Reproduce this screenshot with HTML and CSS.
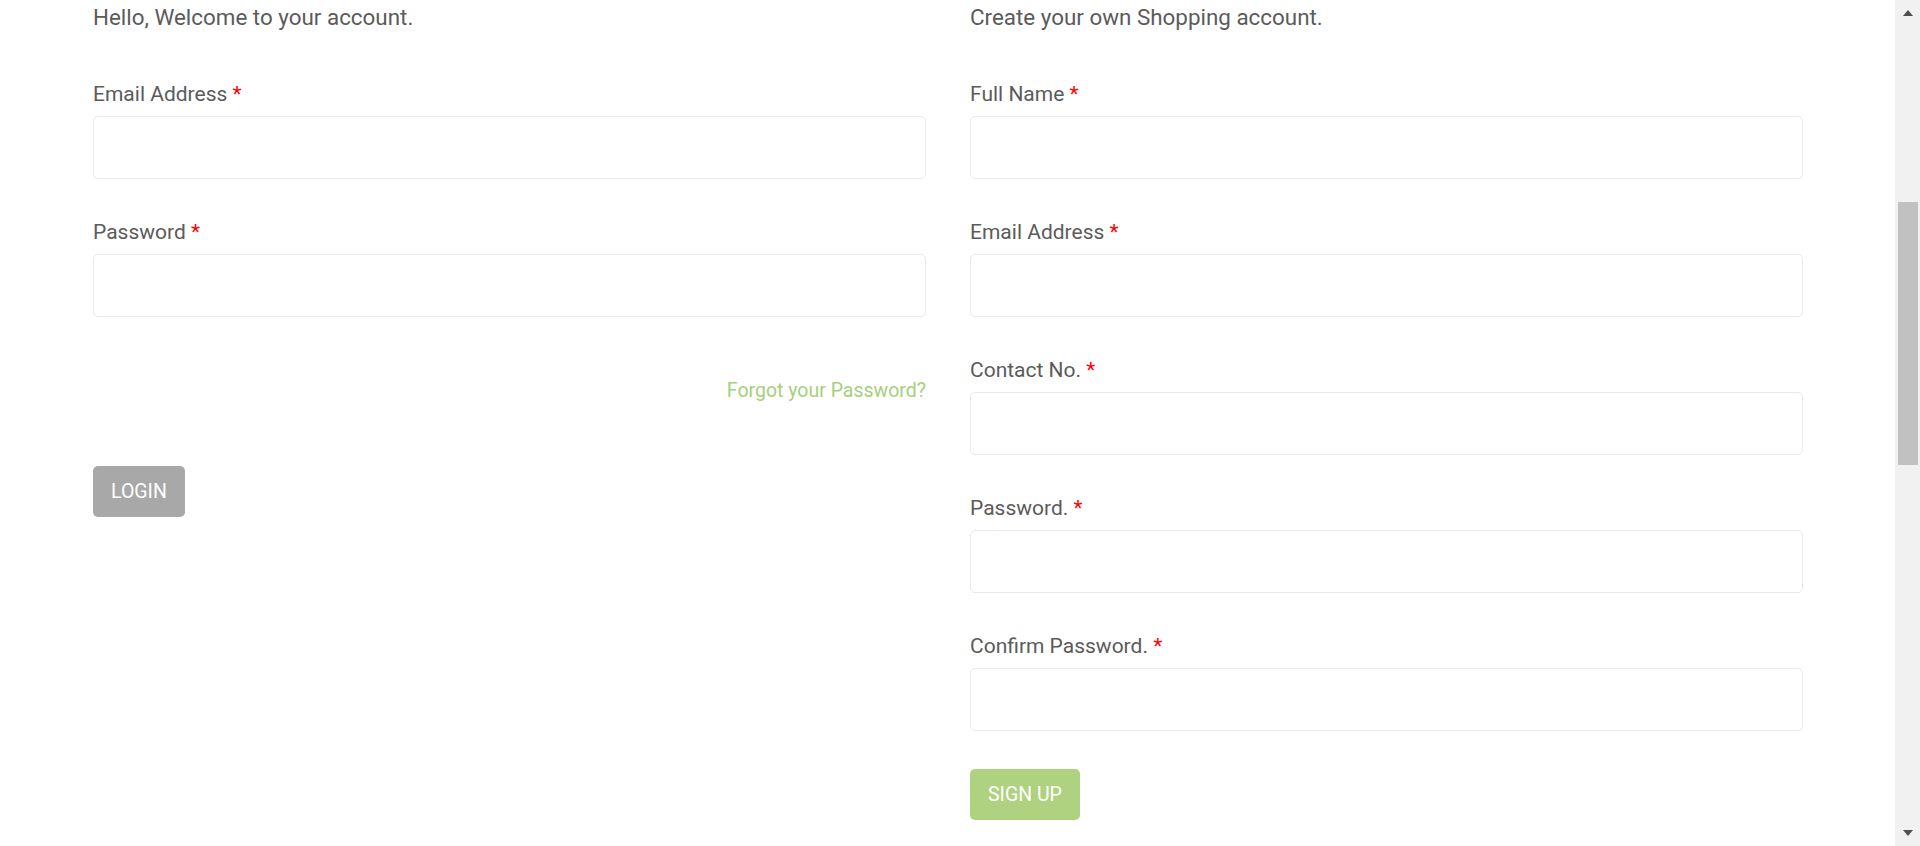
FILE: index.html
```html
<!DOCTYPE html>
<html lang="en">
<head>
<meta charset="utf-8">
<title>Sign in or Register</title>
<link rel="stylesheet" href="styles.css">
</head>
<body>
<section class="account">
  <div class="account-grid">
    <div class="col">
      <p class="col-title">Hello, Welcome to your account.</p>
      <form class="form">
        <div class="group">
          <label class="label">Email Address <span class="req">*</span></label>
          <input class="field" type="email">
        </div>
        <div class="group">
          <label class="label">Password <span class="req">*</span></label>
          <input class="field" type="password">
        </div>
        <div class="forgot-row"><a class="forgot" href="#">Forgot your Password?</a></div>
        <button class="btn btn-gray" type="button">Login</button>
      </form>
    </div>
    <div class="col">
      <p class="col-title">Create your own Shopping account.</p>
      <form class="form">
        <div class="group">
          <label class="label">Full Name <span class="req">*</span></label>
          <input class="field" type="text">
        </div>
        <div class="group">
          <label class="label">Email Address <span class="req">*</span></label>
          <input class="field" type="email">
        </div>
        <div class="group">
          <label class="label">Contact No. <span class="req">*</span></label>
          <input class="field" type="text">
        </div>
        <div class="group">
          <label class="label">Password. <span class="req">*</span></label>
          <input class="field" type="password">
        </div>
        <div class="group last">
          <label class="label">Confirm Password. <span class="req">*</span></label>
          <input class="field" type="password">
        </div>
        <button class="btn btn-green" type="button">Sign Up</button>
      </form>
    </div>
  </div>
</section>
<aside class="scrollbar" aria-hidden="true">
  <div class="sb-arrow sb-up"></div>
  <div class="sb-track"><div class="sb-thumb"></div></div>
  <div class="sb-arrow sb-down"></div>
</aside>
</body>
</html>
```
FILE: styles.css
```css
html, body {
  margin: 0;
  padding: 0;
  background: #fff;
}
body {
  font-family: Roboto, "Liberation Sans", Arial, sans-serif;
  color: #5b5b5b;
}
.account {
  padding-top: 3px;
}
.account-grid {
  width: 1710px;
  margin-left: 93px;
  display: grid;
  grid-template-columns: 833px 833px;
  column-gap: 44px;
}
.col-title {
  margin: 0 0 51px;
  font-size: 22.4px;
  line-height: 28px;
}
.form {
  margin: 0;
  display: flex;
  flex-direction: column;
  align-items: flex-start;
}
.group {
  width: 100%;
  margin-bottom: 41px;
}
.group.last {
  margin-bottom: 38px;
}
.label {
  display: block;
  font-size: 21px;
  line-height: 25px;
  margin-bottom: 9px;
}
.req {
  color: #ff0000;
}
.field {
  display: block;
  box-sizing: border-box;
  width: 100%;
  height: 63px;
  border: 1px solid #e9e9e9;
  border-radius: 5px;
  background: #fff;
  outline: none;
}
.forgot-row {
  width: 100%;
  text-align: right;
  margin-top: 21px;
  margin-bottom: 63px;
  font-size: 19.5px;
  line-height: 24px;
}
.forgot {
  color: #a6cf7d;
  text-decoration: none;
}
.btn {
  border: none;
  border-radius: 5px;
  color: #fff;
  font-family: Roboto, "Liberation Sans", Arial, sans-serif;
  font-size: 19.5px;
  line-height: 23px;
  text-transform: uppercase;
  padding: 14px 18px;
  cursor: pointer;
}
.btn-gray {
  background: #a8a8a8;
}
.btn-green {
  background: #aed27f;
}

/* window scrollbar as captured */
.scrollbar {
  position: fixed;
  top: 0;
  right: 0;
  width: 25px;
  height: 100vh;
  background: #f1f1f1;
  display: flex;
  flex-direction: column;
  align-items: center;
}
.sb-arrow {
  width: 0;
  height: 0;
  border-left: 5.5px solid transparent;
  border-right: 5.5px solid transparent;
}
.sb-up {
  margin-top: 10px;
  border-bottom: 6px solid #505050;
}
.sb-down {
  margin-bottom: 10px;
  border-top: 6px solid #505050;
}
.sb-track {
  flex: 1;
  width: 100%;
  display: flex;
  flex-direction: column;
  align-items: center;
}
.sb-thumb {
  margin-top: 186px;
  width: 20px;
  height: 263px;
  background: #c1c1c1;
}
```
